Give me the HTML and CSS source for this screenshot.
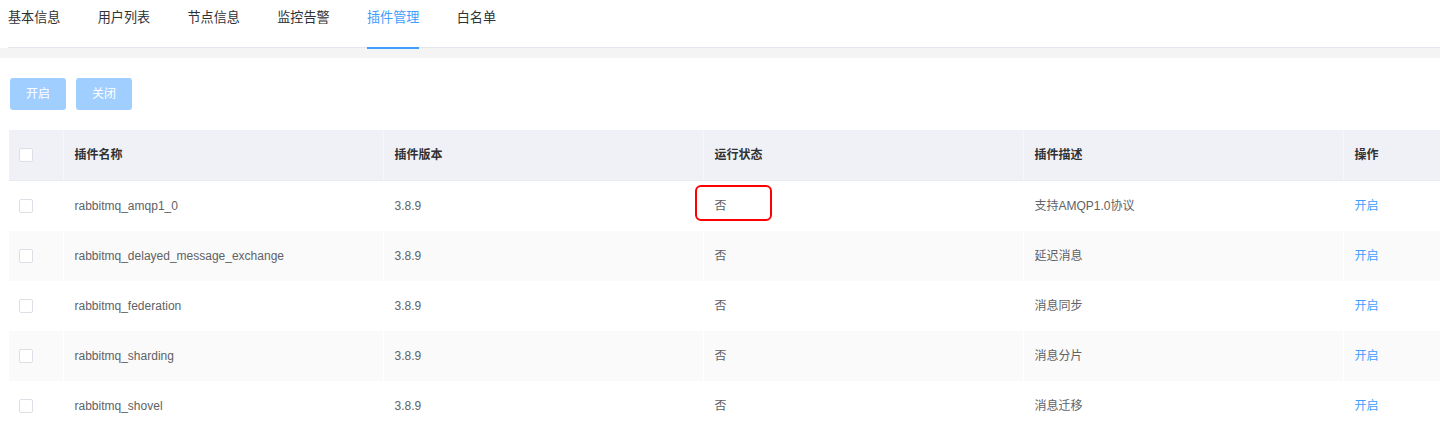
FILE: index.html
```html
<!DOCTYPE html>
<html lang="zh-CN">
<head>
<meta charset="utf-8">
<title>插件管理</title>
<link rel="stylesheet" href="styles.css">
</head>
<body>
<div class="tabs">
  <div class="tab"><span class="tab-label">基本信息</span></div>
  <div class="tab"><span class="tab-label">用户列表</span></div>
  <div class="tab"><span class="tab-label">节点信息</span></div>
  <div class="tab"><span class="tab-label">监控告警</span></div>
  <div class="tab active"><span class="tab-label">插件管理</span></div>
  <div class="tab"><span class="tab-label">白名单</span></div>
</div>
<div class="band"></div>
<div class="toolbar">
  <button class="btn">开启</button>
  <button class="btn">关闭</button>
</div>
<table class="grid">
  <colgroup>
    <col class="c-check"><col class="c-wide"><col class="c-wide"><col class="c-wide"><col class="c-wide"><col>
  </colgroup>
  <thead>
    <tr>
      <th><span class="check"></span></th>
      <th>插件名称</th>
      <th>插件版本</th>
      <th>运行状态</th>
      <th>插件描述</th>
      <th>操作</th>
    </tr>
  </thead>
  <tbody>
    <tr>
      <td><span class="check"></span></td>
      <td>rabbitmq_amqp1_0</td>
      <td>3.8.9</td>
      <td><div class="cell-mark">否<span class="highlight"></span></div></td>
      <td>支持AMQP1.0协议</td>
      <td><a class="link">开启</a></td>
    </tr>
    <tr class="stripe">
      <td><span class="check"></span></td>
      <td>rabbitmq_delayed_message_exchange</td>
      <td>3.8.9</td>
      <td>否</td>
      <td>延迟消息</td>
      <td><a class="link">开启</a></td>
    </tr>
    <tr>
      <td><span class="check"></span></td>
      <td>rabbitmq_federation</td>
      <td>3.8.9</td>
      <td>否</td>
      <td>消息同步</td>
      <td><a class="link">开启</a></td>
    </tr>
    <tr class="stripe">
      <td><span class="check"></span></td>
      <td>rabbitmq_sharding</td>
      <td>3.8.9</td>
      <td>否</td>
      <td>消息分片</td>
      <td><a class="link">开启</a></td>
    </tr>
    <tr>
      <td><span class="check"></span></td>
      <td>rabbitmq_shovel</td>
      <td>3.8.9</td>
      <td>否</td>
      <td>消息迁移</td>
      <td><a class="link">开启</a></td>
    </tr>
  </tbody>
</table>
</body>
</html>
```
FILE: styles.css
```css
html, body {
  margin: 0;
  padding: 0;
  background: #fff;
  font-family: "Liberation Sans", "Noto Sans CJK SC", sans-serif;
  overflow: hidden;
}

.tabs {
  display: flex;
  margin-left: 8px;
  height: 47px;
  border-bottom: 1px solid #e4e7ed;
}

.tab {
  padding: 0 18.7px;
  font-size: 13.1px;
  color: #303133;
}

.tab:first-child {
  padding-left: 0;
}

.tab-label {
  position: relative;
  display: block;
  line-height: 36px;
  height: 36px;
}

.tab.active {
  color: #409eff;
}

.tab.active .tab-label::after {
  content: "";
  position: absolute;
  left: 0;
  right: 0;
  top: 47px;
  height: 2px;
  background: #409eff;
}

.band {
  height: 10px;
  background: #f4f4f5;
}

.toolbar {
  display: flex;
  gap: 10px;
  padding: 20px 0 0 10px;
}

.btn {
  width: 56px;
  height: 32px;
  border: none;
  border-radius: 3px;
  background: #a0cfff;
  color: #fff;
  font-family: inherit;
  font-size: 12px;
  line-height: 20px;
  padding: 0;
}

.grid {
  margin: 20px 0 0 9px;
  width: 1431px;
  border-collapse: collapse;
  table-layout: fixed;
  font-size: 12px;
  line-height: 20px;
}

.c-check { width: 54px; }
.c-wide { width: 320px; }

.grid th,
.grid td {
  text-align: left;
  padding: 0 0 0 11px;
  white-space: nowrap;
}

.grid th {
  height: 50px;
  background: #f0f1f6;
  color: #303133;
  font-weight: bold;
  border-right: 1px solid #f6f7fa;
  border-bottom: 1px solid #e9ebf1;
}

.grid td {
  height: 50px;
  color: #606266;
  border-right: 1px solid #fff;
}

.grid th:first-child,
.grid td:first-child {
  padding-left: 10px;
}

.grid th:last-child,
.grid td:last-child {
  border-right: none;
}

.grid tr.stripe td {
  background: #fafafa;
}

.check {
  display: block;
  width: 14px;
  height: 14px;
  box-sizing: border-box;
  border: 1px solid #dcdfe6;
  border-radius: 2px;
  background: #fff;
}

.link {
  color: #409eff;
  cursor: pointer;
}

.cell-mark {
  position: relative;
}

.highlight {
  position: absolute;
  left: -20px;
  top: -11px;
  width: 77px;
  height: 36px;
  box-sizing: border-box;
  border: 2px solid #f00;
  border-radius: 6px;
}
```
